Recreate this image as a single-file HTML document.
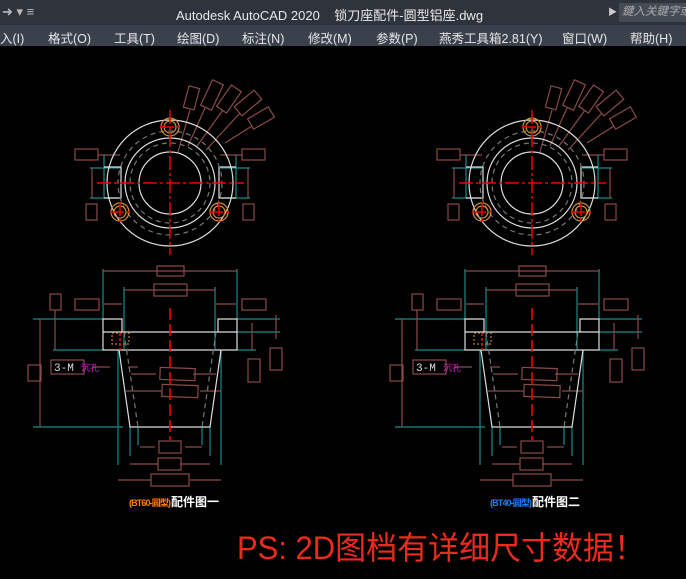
<!DOCTYPE html>
<html><head><meta charset="utf-8"><style>
html,body{margin:0;padding:0;background:#000;width:686px;height:579px;overflow:hidden;font-family:"Liberation Sans","Noto Sans CJK SC",sans-serif}
.title{position:absolute;left:0;top:0;width:686px;height:25px;background:#2f343c;color:#e8e8e8;font-size:13px}
.menu{position:absolute;left:0;top:25px;width:686px;height:21px;background:#3a414c;color:#e6e6e6;font-size:12.5px}
.menu span{position:absolute;top:3px}
svg{position:absolute;left:0;top:46px}
</style></head><body>
<div class="title">
<span style="position:absolute;left:2px;top:4px;color:#bbb">➜ ▾ ≡</span>
<span style="position:absolute;left:176px;top:5px">Autodesk AutoCAD 2020 &nbsp;&nbsp; 锁刀座配件-圆型铝座.dwg</span>
<span style="position:absolute;left:608px;top:5px;font-size:9px;color:#ccc">▶</span>
<div style="position:absolute;left:619px;top:3px;width:67px;height:19px;background:#454b55;color:#aaa;font-size:11.5px;font-style:italic;line-height:19px;padding-left:3px;white-space:nowrap">鍵入关鍵字或</div>
</div>
<div class="menu">
<span style="left:0">入(I)</span><span style="left:48px">格式(O)</span><span style="left:114px">工具(T)</span><span style="left:177px">绘图(D)</span><span style="left:242px">标注(N)</span><span style="left:308px">修改(M)</span><span style="left:376px">参数(P)</span><span style="left:439px">燕秀工具箱2.81(Y)</span><span style="left:562px">窗口(W)</span><span style="left:630px">帮助(H)</span>
</div>
<svg width="686" height="533" viewBox="0 46 686 533">
<defs>
<g id="d" fill="none" stroke-width="1.2">
<g stroke="#8b4a4a">
<rect x="186" y="87" width="11" height="22" transform="rotate(15 192 98)"/>
<rect x="206" y="81" width="12" height="28" transform="rotate(25 212 95)"/>
<rect x="223" y="86" width="12" height="26" transform="rotate(35 229 99)"/>
<rect x="242" y="90" width="12" height="26" transform="rotate(50 248 103)"/>
<rect x="255" y="106" width="12" height="24" transform="rotate(60 261 118)"/>
<path d="M178 152L190 110M188 146L205 108M197 146L223 110M206 150L240 113M225 143L252 126"/>
<rect x="75" y="149" width="23" height="11"/><rect x="242" y="149" width="23" height="11"/>
<rect x="86" y="204" width="11" height="16"/><rect x="243" y="204" width="11" height="16"/>
<path d="M98 155H120M220 155H242M92 168V198M248 168V198"/>
</g>
<g stroke="#1a8a8a"><path d="M90 168H121M90 198H121M104 155V198M220 168H250M220 198H250M236 155V198"/></g>
<g stroke="#ddd">
<circle cx="170" cy="183" r="63"/><circle cx="170" cy="183" r="45"/><circle cx="170" cy="183" r="31"/>
<path d="M104 167H121V198H104M236 167H219V198H236"/>
</g>
<g stroke="#777" stroke-dasharray="5 4"><circle cx="170" cy="183" r="52"/><circle cx="170" cy="183" r="40"/></g>
<g stroke="#d4903a"><circle cx="170" cy="127" r="9"/><circle cx="170" cy="127" r="6"/><circle cx="120" cy="212" r="9"/><circle cx="120" cy="212" r="6"/><circle cx="219" cy="212" r="9"/><circle cx="219" cy="212" r="6"/></g>
<g stroke="#e00" stroke-width="1.5"><path d="M170 110V255M97 183H244M160 127H180M110 212H130M209 212H229M120 202V222M219 202V222" stroke-dasharray="14 3 3 3"/></g>
<g stroke="#1a8a8a"><path d="M103 269V319M237 269V319M124 287V349M215 287V349M33 319H103M237 319H280M237 332H280M53 350H103M237 350H256M33 427H123M118 350V465M221 350V465M130 427V456M210 427V456M138 427V445M202 427V445"/></g>
<g stroke="#8b4a4a">
<path d="M103 271H237M124 290H215M122 304H104M216 304H236M40 319V427M55 310V350M93 367H110M128 367H138M131 374H156M193 374H216M126 391H162M200 391H221M140 447H155M185 447H202M130 464H158M180 464H210M118 480H151M190 480H221M252 323V350M276 315V339"/>
<rect x="157" y="266" width="27" height="10"/><rect x="154" y="284" width="33" height="12"/>
<rect x="75" y="299" width="24" height="11"/><rect x="242" y="299" width="24" height="11"/>
<rect x="50" y="294" width="11" height="16"/><rect x="28" y="365" width="13" height="16"/>
<rect x="248" y="359" width="12" height="23"/><rect x="270" y="348" width="12" height="22"/>
<rect x="160" y="368" width="35" height="12" transform="rotate(2 177 374)"/>
<rect x="162" y="385" width="36" height="12" transform="rotate(2 180 391)"/>
<rect x="159" y="441" width="22" height="12"/><rect x="158" y="458" width="23" height="12"/><rect x="151" y="474" width="38" height="12"/>
<rect x="51" y="360" width="33" height="14"/>
</g>
<g stroke="#ddd"><path d="M103 319H122V332H218V319H237V350H103ZM103 332H122M218 332H237M119 350L130 427H210L221 350"/></g>
<g stroke="#777" stroke-dasharray="5 4"><path d="M124 332L138 427M216 332L202 427"/></g>
<rect x="112" y="333" width="17" height="11" stroke="#c08040" stroke-dasharray="2 2"/>
<path d="M170 308V440" stroke="#e00" stroke-width="1.6" stroke-dasharray="12 4"/>
<path d="M120 333V350" stroke="#e00" stroke-width="1.6" stroke-dasharray="3 2"/>
</g>
</defs>
<use href="#d"/>
<use href="#d" transform="translate(362 0)"/>
<g font-family="Liberation Mono,monospace" font-size="11" fill="#ddd"><text x="54" y="371">3-M</text><text x="416" y="371">3-M</text></g>
<g font-family="Noto Sans CJK SC,sans-serif" font-size="9" fill="#d020d0"><text x="81" y="371">沉孔</text><text x="443" y="371">沉孔</text></g>
<text x="129" y="506" font-size="9" fill="#ff8000" font-weight="bold" textLength="42">(BT60-圆型)</text>
<text x="171" y="506" font-size="12" fill="#fff" font-weight="bold" font-family="Noto Sans CJK SC,sans-serif">配件图一</text>
<text x="490" y="506" font-size="9" fill="#1a80ff" font-weight="bold" textLength="42">(BT40-圆型)</text>
<text x="532" y="506" font-size="12" fill="#fff" font-weight="bold" font-family="Noto Sans CJK SC,sans-serif">配件图二</text>
<text x="237" y="559" font-size="32" fill="#ee2a1e" textLength="408" lengthAdjust="spacingAndGlyphs" font-family="Liberation Sans,Noto Sans CJK SC,sans-serif">PS: 2D图档有详细尺寸数据！</text>
</svg>
</body></html>
